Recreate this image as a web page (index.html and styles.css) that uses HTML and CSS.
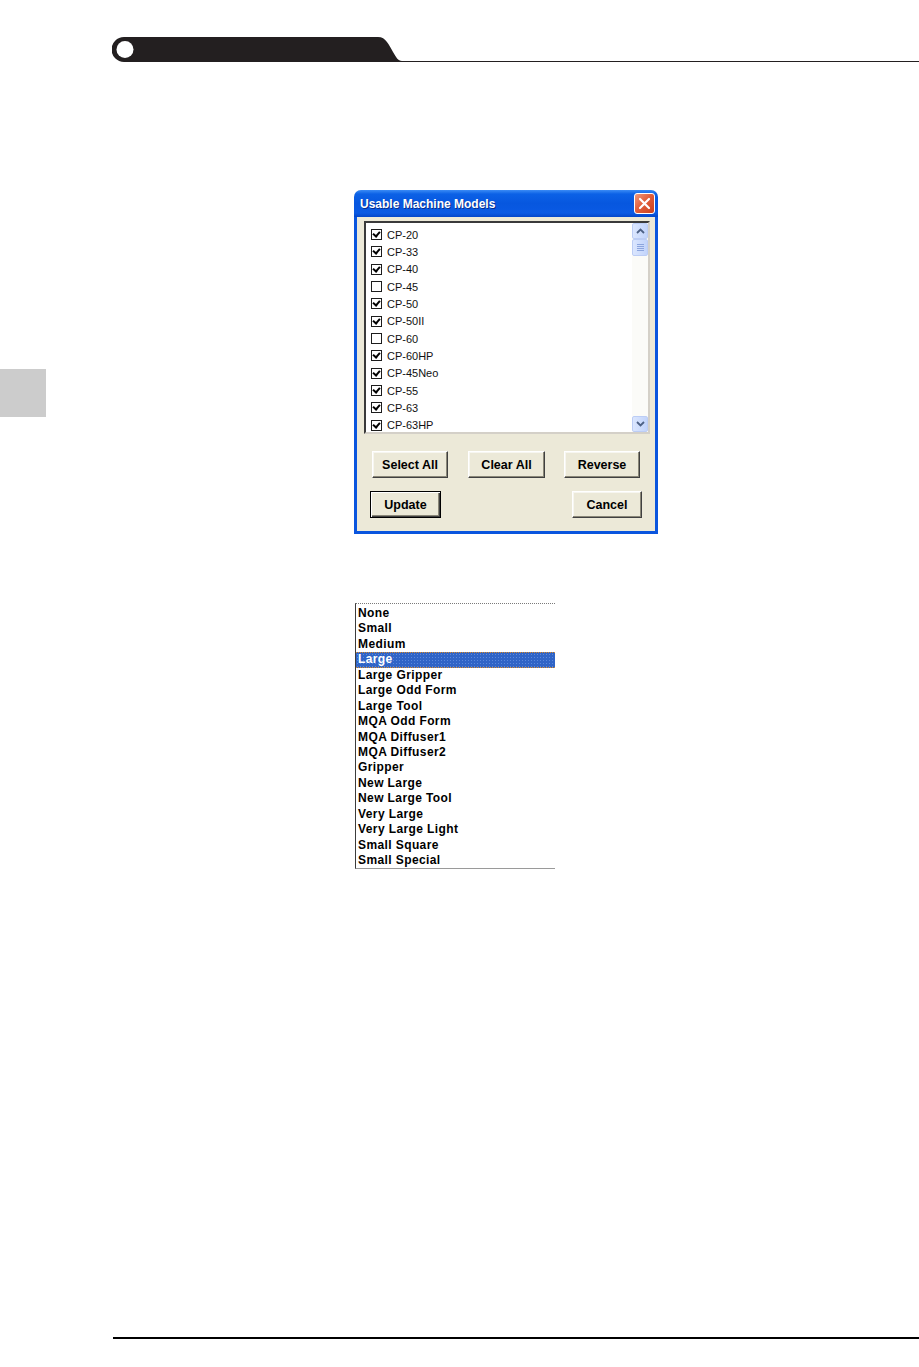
FILE: index.html
```html
<!DOCTYPE html>
<html>
<head>
    <meta charset="utf-8">
    <title>Usable Machine Models</title>
    <link rel="stylesheet" href="styles.css">
</head>
<body>
    <header class="runner">
        <svg class="runner-tab" width="290" height="25" viewBox="0 0 290 25">
            <path d="M12,0 H266 C274,0 277,8 281,15 C284,20 286,24 290,24 V25 H12 A12.5,12.5 0 0 1 12,0 Z" fill="#231f20"/>
            <circle cx="13" cy="12.5" r="8.5" fill="#fff"/>
        </svg>
        <div class="runner-line"></div>
    </header>

    <div class="page">
        <aside class="side">
            <div class="thumb-tab"></div>
        </aside>

        <main class="content">
            <div class="dialog">
                <div class="titlebar">
                    <span class="title">Usable Machine Models</span>
                    <span class="close">
                        <svg width="13" height="13" viewBox="0 0 13 13">
                            <path d="M2,2 L11,11 M11,2 L2,11" stroke="#fff" stroke-width="2.2" stroke-linecap="round"/>
                        </svg>
                    </span>
                </div>
                <div class="dialog-body">
                    <div class="checklist">
                        <div class="items">
                            <div class="item"><span class="cb on"></span>CP-20</div>
                            <div class="item"><span class="cb on"></span>CP-33</div>
                            <div class="item"><span class="cb on"></span>CP-40</div>
                            <div class="item"><span class="cb"></span>CP-45</div>
                            <div class="item"><span class="cb on"></span>CP-50</div>
                            <div class="item"><span class="cb on"></span>CP-50II</div>
                            <div class="item"><span class="cb"></span>CP-60</div>
                            <div class="item"><span class="cb on"></span>CP-60HP</div>
                            <div class="item"><span class="cb on"></span>CP-45Neo</div>
                            <div class="item"><span class="cb on"></span>CP-55</div>
                            <div class="item"><span class="cb on"></span>CP-63</div>
                            <div class="item"><span class="cb on"></span>CP-63HP</div>
                        </div>
                        <div class="scrollbar">
                            <div class="sb-btn">
                                <svg width="9" height="6" viewBox="0 0 9 6"><path d="M1,5 L4.5,1.5 L8,5" fill="none" stroke="#4d6185" stroke-width="1.8"/></svg>
                            </div>
                            <div class="sb-thumb">
                                <span></span><span></span><span></span><span></span>
                            </div>
                            <div class="sb-track"></div>
                            <div class="sb-btn">
                                <svg width="9" height="6" viewBox="0 0 9 6"><path d="M1,1 L4.5,4.5 L8,1" fill="none" stroke="#4d6185" stroke-width="1.8"/></svg>
                            </div>
                        </div>
                    </div>

                    <div class="btn-row first">
                        <button class="btn w76">Select All</button>
                        <button class="btn w77">Clear All</button>
                        <button class="btn w76">Reverse</button>
                    </div>
                    <div class="btn-row second">
                        <button class="btn default">Update</button>
                        <button class="btn w70">Cancel</button>
                    </div>
                </div>
            </div>

            <div class="size-list">
                <div class="row">None</div>
                <div class="row">Small</div>
                <div class="row">Medium</div>
                <div class="row selected">Large</div>
                <div class="row">Large Gripper</div>
                <div class="row">Large Odd Form</div>
                <div class="row">Large Tool</div>
                <div class="row">MQA Odd Form</div>
                <div class="row">MQA Diffuser1</div>
                <div class="row">MQA Diffuser2</div>
                <div class="row">Gripper</div>
                <div class="row">New Large</div>
                <div class="row">New Large Tool</div>
                <div class="row">Very Large</div>
                <div class="row">Very Large Light</div>
                <div class="row">Small Square</div>
                <div class="row">Small Special</div>
            </div>
        </main>
    </div>

    <footer class="foot"></footer>
</body>
</html>
```

FILE: styles.css
```css
body {
    margin: 0;
    min-height: 100vh;
    display: flex;
    flex-direction: column;
    background: #fff;
    font-family: "Liberation Sans", Arial, sans-serif;
}

/* running header */
.runner {
    display: flex;
    margin: 37px 0 0 112px;
}
.runner-tab {
    display: block;
    flex: none;
}
.runner-line {
    flex: 1;
    height: 25px;
    box-sizing: border-box;
    border-bottom: 1px solid #231f20;
}

.page {
    display: grid;
    grid-template-columns: 46px 1fr;
}
.thumb-tab {
    margin-top: 307px;
    height: 48px;
    background: #cccccc;
}

/* XP dialog */
.dialog {
    width: 304px;
    margin: 128px 0 0 308px;
    background: #ece9d8;
    border-radius: 7px 7px 0 0;
}
.titlebar {
    height: 27px;
    display: flex;
    align-items: center;
    padding: 0 3px 0 6px;
    border-radius: 7px 7px 0 0;
    background: linear-gradient(#3a8bf5 0%, #0c61e6 15%, #0757df 50%, #0a5ae4 85%, #0346c9 100%);
    color: #fff;
    font-weight: bold;
    font-size: 12px;
}
.title {
    flex: 1;
    text-shadow: 1px 1px 0 #0a2f8c;
}
.close {
    width: 21px;
    height: 21px;
    box-sizing: border-box;
    border: 1px solid #fff;
    border-radius: 3px;
    background: linear-gradient(135deg, #f09a7d 0%, #e2603c 45%, #c9401e 100%);
    display: flex;
    align-items: center;
    justify-content: center;
}
.dialog-body {
    border: 3px solid #0a55de;
    border-top: 0;
    padding: 4px 5px 13px 7px;
}

.checklist {
    height: 213px;
    box-sizing: border-box;
    display: flex;
    background: #fff;
    border: 2px solid;
    border-color: #3a3a3a #d4d0c8 #d4d0c8 #3a3a3a;
    overflow: hidden;
}
.items {
    flex: 1;
    padding: 3px 0 0 5px;
}
.item {
    height: 17.33px;
    display: flex;
    align-items: center;
    font-size: 11px;
    color: #111;
}
.cb {
    width: 11px;
    height: 11px;
    box-sizing: border-box;
    border: 1px solid #1c1c1c;
    margin-right: 5px;
    background: #fff;
    position: relative;
}
.cb.on::after {
    content: "";
    position: absolute;
    left: 2px;
    top: 0px;
    width: 3px;
    height: 5px;
    border: solid #000;
    border-width: 0 2px 2px 0;
    transform: rotate(40deg);
}

.scrollbar {
    width: 16px;
    display: flex;
    flex-direction: column;
    background: #fbfbf8;
}
.sb-btn,
.sb-thumb {
    height: 16px;
    box-sizing: border-box;
    border: 1px solid #bccdf5;
    border-radius: 2px;
    background: linear-gradient(90deg, #dbe6fe, #c2d4fb);
    display: flex;
    align-items: center;
    justify-content: center;
}
.sb-thumb {
    height: 17px;
    flex-direction: column;
    gap: 1px;
}
.sb-thumb span {
    width: 7px;
    height: 1px;
    background: #8ca5de;
}
.sb-track {
    flex: 1;
}

/* buttons */
.btn-row {
    display: flex;
}
.btn-row.first {
    margin-top: 17px;
    padding-left: 8px;
    gap: 20px;
}
.btn-row.first .btn:last-child {
    margin-left: -1px;
}
.btn-row.second {
    margin-top: 13px;
    padding: 0 8px 0 6px;
    justify-content: space-between;
}
.btn {
    height: 27px;
    box-sizing: border-box;
    padding: 0;
    background: #ece9d8;
    border: 1px solid;
    border-color: #fff #404040 #404040 #fff;
    box-shadow: inset -1px -1px 0 #8a8778, inset 1px 1px 0 #f7f6f0;
    font-family: "Liberation Sans", Arial, sans-serif;
    font-weight: bold;
    font-size: 12.5px;
    color: #000;
}
.w76 { width: 76px; }
.w77 { width: 77px; }
.w70 { width: 70px; }
.btn.default {
    width: 71px;
    border-color: #000;
    box-shadow: inset 1px 1px 0 #fff, inset -1px -1px 0 #404040, inset -2px -2px 0 #8a8778;
}

/* size list */
.size-list {
    width: 200px;
    margin: 69px 0 0 309px;
    box-sizing: border-box;
    padding-top: 2px;
    border-top: 1px dotted #7a7a7a;
    border-left: 1px solid #3c3c3c;
    border-bottom: 1px solid #9a9a9a;
}
.row {
    height: 15.44px;
    line-height: 15.44px;
    padding-left: 2px;
    font-weight: bold;
    font-size: 12px;
    letter-spacing: 0.4px;
    color: #000;
    white-space: nowrap;
}
.row.selected {
    box-sizing: border-box;
    color: #fff;
    line-height: 13.44px;
    background-color: #3064c6;
    background-image: radial-gradient(#5a88dd 0.7px, transparent 0.9px);
    background-size: 3px 3px;
    border-top: 1px dotted #d98a2a;
    border-bottom: 1px dotted #d98a2a;
}

.foot {
    margin: auto 0 28px 113px;
    border-top: 2px solid #000;
}
```
